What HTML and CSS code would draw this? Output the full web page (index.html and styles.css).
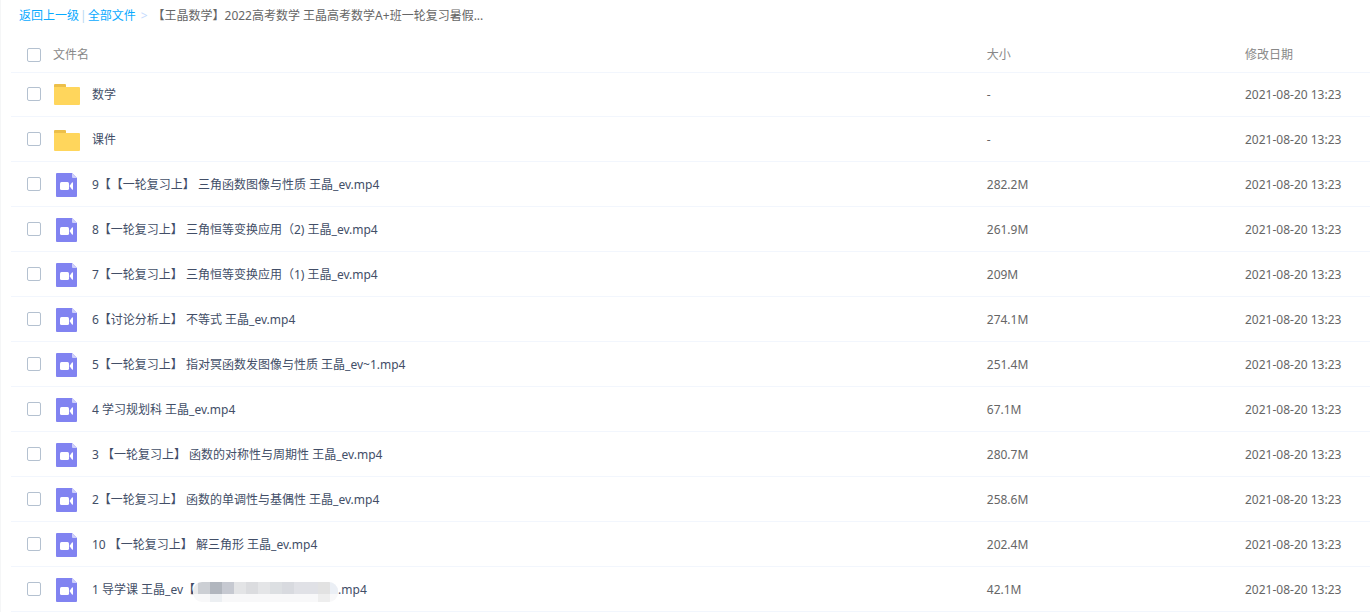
FILE: index.html
```
<!DOCTYPE html>
<html lang="zh-CN">
<head>
    <meta charset="UTF-8">
    <meta name="viewport" content="width=device-width, initial-scale=1.0">
    <title>全部文件</title>
    <link rel="stylesheet" href="styles.css">
</head>
<body>
    <!-- 图标 -->
    <svg class="sprite" aria-hidden="true">
        <symbol id="icon-folder" viewBox="0 0 26 21">
            <path d="M0 5V1a1 1 0 0 1 1-1h10a1 1 0 0 1 1 1v4z" fill="#ecbf4a"/>
            <path d="M0 3h25a1 1 0 0 1 1 1v16a1 1 0 0 1-1 1H1a1 1 0 0 1-1-1z" fill="#ffd65c"/>
        </symbol>
        <symbol id="icon-video" viewBox="0 0 21 24">
            <path d="M1 0h15l5 5v18a1 1 0 0 1-1 1H1a1 1 0 0 1-1-1V1a1 1 0 0 1 1-1z" fill="#8183f1"/>
            <path d="M16 0l5 5h-4a1 1 0 0 1-1-1z" fill="#cfd0fa"/>
            <rect x="4" y="9" width="9" height="8" rx="1.5" fill="#fff"/>
            <path d="M13.500 13L16 9.500q1-.8 1 .5v6q0 1.300-1 .5z" fill="#fff"/>
        </symbol>
    </svg>

    <div class="container">
        <nav class="breadcrumb">
            <a href="#">返回上一级</a>
            <span class="divider">|</span>
            <a href="#">全部文件</a>
            <span class="arrow">&gt;</span>
            <span class="current">【王晶数学】2022高考数学 王晶高考数学A+班一轮复习暑假...</span>
        </nav>

        <table class="file-list">
            <thead>
                <tr>
                    <th class="col-name"><div class="cell"><input type="checkbox" id="all"><label for="all">文件名</label></div></th>
                    <th class="col-size">大小</th>
                    <th class="col-date">修改日期</th>
                </tr>
            </thead>
            <tbody>
                <tr>
                    <td><div class="cell"><input type="checkbox" id="f1"><svg class="icon folder"><use href="#icon-folder"/></svg><label for="f1">数学</label></div></td>
                    <td>-</td>
                    <td>2021-08-20 13:23</td>
                </tr>
                <tr>
                    <td><div class="cell"><input type="checkbox" id="f2"><svg class="icon folder"><use href="#icon-folder"/></svg><label for="f2">课件</label></div></td>
                    <td>-</td>
                    <td>2021-08-20 13:23</td>
                </tr>
                <tr>
                    <td><div class="cell"><input type="checkbox" id="f3"><svg class="icon video"><use href="#icon-video"/></svg><label for="f3">9【【一轮复习上】 三角函数图像与性质 王晶_ev.mp4</label></div></td>
                    <td>282.2M</td>
                    <td>2021-08-20 13:23</td>
                </tr>
                <tr>
                    <td><div class="cell"><input type="checkbox" id="f4"><svg class="icon video"><use href="#icon-video"/></svg><label for="f4">8【一轮复习上】 三角恒等变换应用（2) 王晶_ev.mp4</label></div></td>
                    <td>261.9M</td>
                    <td>2021-08-20 13:23</td>
                </tr>
                <tr>
                    <td><div class="cell"><input type="checkbox" id="f5"><svg class="icon video"><use href="#icon-video"/></svg><label for="f5">7【一轮复习上】 三角恒等变换应用（1) 王晶_ev.mp4</label></div></td>
                    <td>209M</td>
                    <td>2021-08-20 13:23</td>
                </tr>
                <tr>
                    <td><div class="cell"><input type="checkbox" id="f6"><svg class="icon video"><use href="#icon-video"/></svg><label for="f6">6【讨论分析上】 不等式 王晶_ev.mp4</label></div></td>
                    <td>274.1M</td>
                    <td>2021-08-20 13:23</td>
                </tr>
                <tr>
                    <td><div class="cell"><input type="checkbox" id="f7"><svg class="icon video"><use href="#icon-video"/></svg><label for="f7">5【一轮复习上】 指对冥函数发图像与性质 王晶_ev~1.mp4</label></div></td>
                    <td>251.4M</td>
                    <td>2021-08-20 13:23</td>
                </tr>
                <tr>
                    <td><div class="cell"><input type="checkbox" id="f8"><svg class="icon video"><use href="#icon-video"/></svg><label for="f8">4 学习规划科 王晶_ev.mp4</label></div></td>
                    <td>67.1M</td>
                    <td>2021-08-20 13:23</td>
                </tr>
                <tr>
                    <td><div class="cell"><input type="checkbox" id="f9"><svg class="icon video"><use href="#icon-video"/></svg><label for="f9">3 【一轮复习上】 函数的对称性与周期性 王晶_ev.mp4</label></div></td>
                    <td>280.7M</td>
                    <td>2021-08-20 13:23</td>
                </tr>
                <tr>
                    <td><div class="cell"><input type="checkbox" id="f10"><svg class="icon video"><use href="#icon-video"/></svg><label for="f10">2【一轮复习上】 函数的单调性与基偶性 王晶_ev.mp4</label></div></td>
                    <td>258.6M</td>
                    <td>2021-08-20 13:23</td>
                </tr>
                <tr>
                    <td><div class="cell"><input type="checkbox" id="f11"><svg class="icon video"><use href="#icon-video"/></svg><label for="f11">10 【一轮复习上】 解三角形 王晶_ev.mp4</label></div></td>
                    <td>202.4M</td>
                    <td>2021-08-20 13:23</td>
                </tr>
                <tr>
                    <td><div class="cell"><input type="checkbox" id="f12"><svg class="icon video"><use href="#icon-video"/></svg><label for="f12">1 导学课 王晶_ev【<svg class="mosaic" viewBox="0 0 145 20" aria-hidden="true">
                        <clipPath id="pill"><rect width="145" height="20" rx="9"/></clipPath>
                        <g clip-path="url(#pill)">
                            <rect width="145" height="20" fill="#f8f8f9"/>
                            <rect width="5" height="12" fill="#eaebec"/>
                            <rect x="5" width="12" height="12" fill="#cccfd4"/>
                            <rect x="17" width="12" height="12" fill="#b1b6be"/>
                            <rect x="29" width="12" height="12" fill="#c6c9d1"/>
                            <rect x="41" width="12" height="12" fill="#e3e4e6"/>
                            <rect x="53" width="12" height="12" fill="#dbdcdf"/>
                            <rect x="65" width="12" height="12" fill="#e4e5e7"/>
                            <rect x="77" width="12" height="12" fill="#dcdfe2"/>
                            <rect x="89" width="12" height="12" fill="#d8dadf"/>
                            <rect x="101" width="24" height="12" fill="#e0e1e6"/>
                            <rect x="125" width="12" height="12" fill="#e2e2e2"/>
                            <rect x="137" width="8" height="12" fill="#ebeff5"/>
                            <rect x="17" y="12" width="12" height="8" fill="#eceff2"/>
                            <rect x="125" y="12" width="12" height="8" fill="#eeeeee"/>
                        </g>
                    </svg>.mp4</label></div></td>
                    <td>42.1M</td>
                    <td>2021-08-20 13:23</td>
                </tr>
            </tbody>
        </table>
    </div>
</body>
</html>
```
FILE: styles.css
```
* {
    box-sizing: border-box;
    margin: 0;
    padding: 0;
}

body {
    font-family: "Noto Sans", "Noto Sans CJK SC", sans-serif;
    font-size: 12px;
    line-height: 18px;
    color: #666;
    background-color: #fff;
    text-spacing-trim: space-all;
}

.sprite {
    display: none;
}

.container {
    min-height: 100vh;
    padding-left: 10px;
    border-left: 1px solid #f5f6f7;
}

.breadcrumb {
    display: flex;
    align-items: center;
    height: 36px;
    padding: 0 8px 4px;
    white-space: nowrap;
}

.breadcrumb a {
    color: #09aaff;
    text-decoration: none;
}

.breadcrumb a:hover {
    text-decoration: underline;
}

.divider {
    margin: 0 1px;
    color: #b8d8f0;
}

.arrow {
    margin: 0 5px;
    color: #c4dbfe;
}

.file-list {
    width: 100%;
    table-layout: fixed;
    border-collapse: separate;
    border-spacing: 0;
}

.file-list th,
.file-list td {
    height: 45px;
    padding-top: 2px;
    border-bottom: 1px solid #f2f6fd;
    text-align: left;
    vertical-align: middle;
    white-space: nowrap;
}

.file-list th {
    height: 37px;
    color: #888;
    font-weight: normal;
}

.file-list tbody tr:first-child td {
    height: 44px;
    padding-top: 0;
}

.file-list tbody tr:hover {
    background-color: #f4fbff;
}

.col-size {
    width: 19%;
}

.col-date {
    width: 9.2%;
}

.cell {
    display: flex;
    align-items: center;
    padding-left: 16px;
}

.cell label {
    color: #424e67;
}

th .cell label {
    color: #888;
}

input[type="checkbox"] {
    appearance: none;
    flex: none;
    width: 14px;
    height: 14px;
    margin-right: 12px;
    border: 1px solid #b4c1d0;
    border-radius: 2px;
    background-color: #fff;
    cursor: pointer;
}

td input[type="checkbox"] {
    margin-bottom: 2px;
}

input[type="checkbox"]:checked {
    background-color: #09aaff;
    border-color: #09aaff;
}

.icon {
    flex: none;
}

.folder {
    width: 26px;
    height: 21px;
    margin: 0 12px 0 1px;
}

.video {
    width: 21px;
    height: 24px;
    margin: 0 15px 0 3px;
}

/* 打码部分盖住括号右半边 */
.mosaic {
    width: 145px;
    height: 20px;
    margin: -2px 0 -4px -2px;
    vertical-align: middle;
}
```
